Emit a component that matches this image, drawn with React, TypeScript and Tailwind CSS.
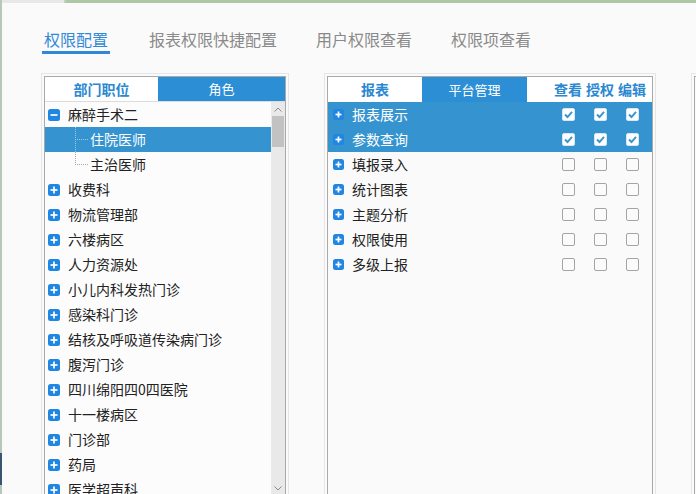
import React from "react";

const depts = [
  "收费科",
  "物流管理部",
  "六楼病区",
  "人力资源处",
  "小儿内科发热门诊",
  "感染科门诊",
  "结核及呼吸道传染病门诊",
  "腹泻门诊",
  "四川绵阳四0四医院",
  "十一楼病区",
  "门诊部",
  "药局",
  "医学超声科",
];

const reports = [
  { name: "报表展示", on: true },
  { name: "参数查询", on: true },
  { name: "填报录入", on: false },
  { name: "统计图表", on: false },
  { name: "主题分析", on: false },
  { name: "权限使用", on: false },
  { name: "多级上报", on: false },
];

function ToggleIcon({ size = 12, minus = false }: { size?: number; minus?: boolean }) {
  const c = size / 2;
  return (
    <svg width={size} height={size} viewBox={`0 0 ${size} ${size}`} className="shrink-0">
      <rect x="0" y="0" width={size} height={size} rx="2.5" fill="#1f86e2" />
      <line x1={2.5} y1={c} x2={size - 2.5} y2={c} stroke="#fff" strokeWidth="1.7" />
      {!minus && <line x1={c} y1={2.5} x2={c} y2={size - 2.5} stroke="#fff" strokeWidth="1.7" />}
    </svg>
  );
}

function TreeLine({ last, light }: { last?: boolean; light?: boolean }) {
  const col = light ? "#9ccbe9" : "#a8a8a8";
  return (
    <svg width="44" height="25" className="shrink-0">
      <line x1="30.5" y1="0" x2="30.5" y2={last ? 12.5 : 25} stroke={col} strokeDasharray="1 1" />
      <line x1="30" y1="12.5" x2="43" y2="12.5" stroke={col} strokeDasharray="1 1" />
    </svg>
  );
}

function Check({ on }: { on: boolean }) {
  return on ? (
    <span className="w-[13px] h-[13px] rounded-[2px] bg-white border border-[#d6e6f2] flex items-center justify-center">
      <svg width="11" height="11" viewBox="0 0 11 11">
        <polyline points="2,5.5 4.5,8 9,2.8" fill="none" stroke="#3594cf" strokeWidth="1.9" />
      </svg>
    </span>
  ) : (
    <span className="w-[13px] h-[13px] rounded-[2px] bg-[#fbfbfb] border border-[#a4a4a4]" />
  );
}

export default function App() {
  return (
    <div className="w-[696px] h-[494px] overflow-hidden bg-[#fafafa] flex font-['Noto_Sans_CJK_SC','Microsoft_YaHei',sans-serif]">
      <div className="w-[2px] shrink-0 flex flex-col">
        <div className="h-[453px] bg-[#b7c7ba]" />
        <div className="h-[32px] bg-[#3a5571]" />
        <div className="flex-1 bg-[#b7c7ba]" />
      </div>

      <div className="flex-1 min-w-0 flex flex-col">
        <div className="h-[3px] shrink-0 flex">
          <div className="w-[64px] bg-[#e6e9e7] border-r-2 border-[#c4cdc6]" />
          <div className="flex-1 bg-[#aec8a6]" />
        </div>

        <div className="flex pl-[40px] pt-[24px] text-[16px] leading-[24px] shrink-0">
          <div className="px-[2px] text-[#3289d8] border-b-[3px] border-[#2f87d8]">权限配置</div>
          <div className="ml-[37px] px-[2px] text-[#8a8a8a]">报表权限快捷配置</div>
          <div className="ml-[35px] px-[2px] text-[#8a8a8a]">用户权限查看</div>
          <div className="ml-[35px] px-[2px] text-[#8a8a8a]">权限项查看</div>
        </div>

        <div className="flex gap-[41px] pl-[42px] mt-[22px] items-start">
          {/* left panel */}
          <div className="w-[242px] h-[420px] shrink-0 border border-[#a9a9a9] bg-[#fcfcfc] flex flex-col outline-1 outline-offset-2 outline-[#e6e6e6]">
            <div className="h-[25px] shrink-0 flex border-b border-[#dcdcdc]">
              <div className="w-[113px] bg-white flex items-center justify-center text-[14px] font-bold text-[#2b88d0]">部门职位</div>
              <div className="flex-1 bg-[#2c8fd6] flex items-center justify-center text-[13px] text-white">角色</div>
            </div>
            <div className="flex flex-1 min-h-0">
              <div className="flex-1 min-w-0 overflow-hidden text-[14px] text-[#222]">
                <div className="h-[25px] flex items-center pl-[3px]">
                  <ToggleIcon minus />
                  <span className="ml-[8px]">麻醉手术二</span>
                </div>
                <div className="h-[25px] flex items-center bg-[#3594cf] text-white">
                  <TreeLine light />
                  <span className="ml-[1px]">住院医师</span>
                </div>
                <div className="h-[25px] flex items-center">
                  <TreeLine last />
                  <span className="ml-[1px]">主治医师</span>
                </div>
                {depts.map((d) => (
                  <div key={d} className="h-[25px] flex items-center pl-[3px]">
                    <ToggleIcon />
                    <span className="ml-[8px] whitespace-nowrap">{d}</span>
                  </div>
                ))}
              </div>
              <div className="w-[14px] shrink-0 bg-[#e9e9e9] flex flex-col">
                <div className="h-[14px] flex items-center justify-center">
                  <svg width="8" height="5" viewBox="0 0 8 5">
                    <polyline points="0.5,4.5 4,1 7.5,4.5" fill="none" stroke="#8a8a8a" strokeWidth="1" />
                  </svg>
                </div>
                <div className="h-[31px] mx-[1px] bg-[#c2c2c2]" />
                <div className="flex-1" />
                <div className="h-[14px] flex items-center justify-center">
                  <svg width="8" height="5" viewBox="0 0 8 5">
                    <polyline points="0.5,0.5 4,4 7.5,0.5" fill="none" stroke="#8a8a8a" strokeWidth="1" />
                  </svg>
                </div>
              </div>
            </div>
          </div>

          {/* right panel */}
          <div className="w-[326px] h-[440px] shrink-0 border border-[#a9a9a9] bg-[#fafafa] flex flex-col outline-1 outline-offset-2 outline-[#e6e6e6]">
            <div className="h-[25px] shrink-0 flex">
              <div className="w-[94px] bg-white flex items-center justify-center text-[14px] font-bold text-[#2b88d0]">报表</div>
              <div className="w-[105px] bg-[#2c8fd6] flex items-center justify-center text-[13px] text-white">平台管理</div>
              <div className="flex-1 bg-white flex justify-end items-center pr-[4px] text-[14px] font-bold text-[#2b88d0]">
                <span className="w-[32px] text-center">查看</span>
                <span className="w-[32px] text-center">授权</span>
                <span className="w-[32px] text-center">编辑</span>
              </div>
            </div>
            <div className="text-[14px]">
              {reports.map((r) => (
                <div
                  key={r.name}
                  className={`h-[25px] flex items-center pl-[5px] pr-[4px] ${r.on ? "bg-[#3594cf] text-white" : "text-[#222]"}`}
                >
                  <ToggleIcon size={11} />
                  <span className="ml-[8px] flex-1">{r.name}</span>
                  {[0, 1, 2].map((i) => (
                    <span key={i} className="w-[32px] flex justify-center">
                      <Check on={r.on} />
                    </span>
                  ))}
                </div>
              ))}
            </div>
          </div>

          {/* third panel, cut by the window */}
          <div className="w-[200px] h-[440px] shrink-0 border border-[#a9a9a9] bg-[#fafafa] outline-1 outline-offset-2 outline-[#e6e6e6]" />
        </div>
      </div>
    </div>
  );
}
